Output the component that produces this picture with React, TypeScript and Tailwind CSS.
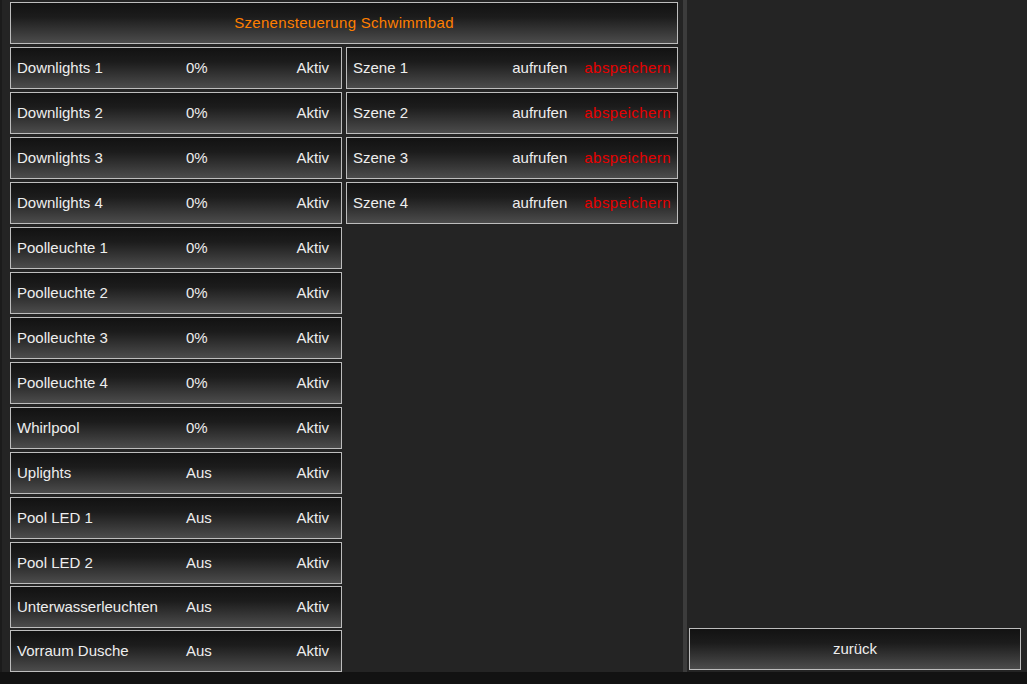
import React from "react";

const leftRows: [string, string][] = [
  ["Downlights 1", "0%"],
  ["Downlights 2", "0%"],
  ["Downlights 3", "0%"],
  ["Downlights 4", "0%"],
  ["Poolleuchte 1", "0%"],
  ["Poolleuchte 2", "0%"],
  ["Poolleuchte 3", "0%"],
  ["Poolleuchte 4", "0%"],
  ["Whirlpool", "0%"],
  ["Uplights", "Aus"],
  ["Pool LED 1", "Aus"],
  ["Pool LED 2", "Aus"],
  ["Unterwasserleuchten", "Aus"],
  ["Vorraum Dusche", "Aus"],
];

const scenes = ["Szene 1", "Szene 2", "Szene 3", "Szene 4"];

const btn =
  "h-[42px] shrink-0 border border-[#bdbdbd] bg-[linear-gradient(to_bottom,#121212_0%,#1c1c1c_35%,#4c4c4c_100%)] flex items-center text-[15px] text-[#eeeeee]";

export default function App() {
  return (
    <div className="w-[1027px] h-[684px] bg-[#121212] flex flex-col font-['Liberation_Sans',Arial,sans-serif] overflow-hidden">
      <div className="flex h-[672px] shrink-0">
        <div className="w-[683px] bg-[#242424] border-l-2 border-[#1b1b1b] pl-[8px] pt-[2px] flex flex-col">
          <div className={btn + " w-[668px] justify-center text-[#ff7f00] tracking-[0.3px]"}>
            Szenensteuerung Schwimmbad
          </div>
          <div className="flex gap-[4px] mt-[3px]">
            <div className="w-[332px] flex flex-col gap-[3px]">
              {leftRows.map(([name, val], i) => (
                <div
                  key={name}
                  className={btn + " pl-[6px] pr-[12px]" + (i >= 12 ? " -mt-px" : "")}
                >
                  <span className="w-[169px] whitespace-nowrap">{name}</span>
                  <span>{val}</span>
                  <span className="ml-auto">Aktiv</span>
                </div>
              ))}
            </div>
            <div className="w-[332px] flex flex-col gap-[3px]">
              {scenes.map((s) => (
                <div key={s} className={btn + " pl-[6px] pr-[6px]"}>
                  <span>{s}</span>
                  <span className="ml-auto">aufrufen</span>
                  <span className="ml-[17px] text-[#e60000] tracking-[0.45px]">abspeichern</span>
                </div>
              ))}
            </div>
          </div>
        </div>
        <div className="w-[4px] bg-[#3c3c3c]" />
        <div className="flex-1 bg-[#242424] flex flex-col justify-end pl-[2px] pr-[6px] pb-[2px]">
          <div className={btn + " justify-center"}>zurück</div>
        </div>
      </div>
    </div>
  );
}
